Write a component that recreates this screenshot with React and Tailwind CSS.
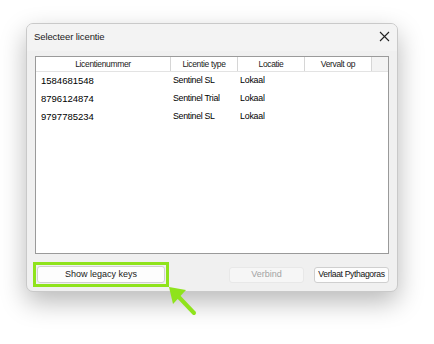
import React from 'react';

const rows = [
  { nr: '1584681548', type: 'Sentinel SL', loc: 'Lokaal' },
  { nr: '8796124874', type: 'Sentinel Trial', loc: 'Lokaal' },
  { nr: '9797785234', type: 'Sentinel SL', loc: 'Lokaal' },
];

const font = { fontFamily: '"Liberation Sans", Arial, sans-serif' };

const App = () => {
  return (
    <div className="relative w-[434px] h-[344px] bg-white pl-[26px] pt-[23px]" style={font}>
      {/* Dialog */}
      <div className="w-[372px] h-[269px] flex flex-col rounded-[7px] border border-[#c9c9c9] bg-[#f0f0f0] shadow-[0_10px_26px_rgba(0,0,0,0.28)] overflow-hidden">
        {/* Title bar */}
        <div className="h-[27px] flex items-center justify-between pl-[7px] pr-[7px] bg-[#f3f3f3]">
          <span className="text-[9.5px] text-[#1b1b1b] tracking-[-0.1px]">Selecteer licentie</span>
          <svg width="11" height="11" viewBox="0 0 11 11" className="mb-[2px]">
            <path d="M1 1 L10 10 M10 1 L1 10" stroke="#222" strokeWidth="1.1" fill="none" />
          </svg>
        </div>

        {/* List */}
        <div className="px-[8px] pt-[5px]">
          <div className="h-[198px] border border-[#9a9a9a] bg-white flex flex-col">
            <div className="h-[15px] flex border-b border-[#e3e3e3] bg-white text-[8.5px] text-[#1a1a1a] tracking-[-0.35px]">
              <div className="w-[135px] flex items-center justify-center border-r border-[#d6d6d6]">Licentienummer</div>
              <div className="w-[67px] flex items-center justify-center border-r border-[#d6d6d6]">Licentie type</div>
              <div className="w-[67px] flex items-center justify-center border-r border-[#d6d6d6]">Locatie</div>
              <div className="w-[67px] flex items-center justify-center border-r border-[#d6d6d6]">Vervalt op</div>
              <div className="flex-1 bg-[#f3f3f3]" />
            </div>
            {rows.map((r) => (
              <div key={r.nr} className="h-[18px] flex items-center text-black">
                <div className="w-[135px] pl-[5px] text-[9.5px]">{r.nr}</div>
                <div className="w-[67px] pl-[2px] text-[8.8px] tracking-[-0.3px]">{r.type}</div>
                <div className="w-[67px] pl-[2px] text-[8.8px] tracking-[-0.2px]">{r.loc}</div>
              </div>
            ))}
          </div>
        </div>

        {/* Buttons */}
        <div className="mt-[8px] pl-[6px] pr-[8px] flex items-center">
          <div className="border-[3px] border-[#8fe31c] p-px">
            <button className="w-[128px] h-[17px] rounded-[3px] border border-[#d0d0d0] bg-[#fdfdfd] text-[9px] text-[#1a1a1a] flex items-center justify-center">
              Show legacy keys
            </button>
          </div>
          <div className="flex-1" />
          <button className="w-[75px] h-[16px] rounded-[3px] border border-[#e8e8e8] bg-[#f6f6f6] text-[9px] text-[#a3a3a3] flex items-center justify-center">
            Verbind
          </button>
          <button className="ml-[10px] w-[75px] h-[16px] rounded-[3px] border border-[#cfcfcf] bg-[#fdfdfd] text-[8.6px] tracking-[-0.35px] text-[#111] flex items-center justify-center">
            Verlaat Pythagoras
          </button>
        </div>
      </div>

      {/* Annotation arrow */}
      <svg className="absolute left-[160px] top-[280px]" width="40" height="40" viewBox="0 0 40 40">
        <polygon points="9,7 26,10 13,24" fill="#8fe31c" />
        <line x1="15" y1="13" x2="34" y2="33" stroke="#8fe31c" strokeWidth="4" strokeLinecap="round" />
      </svg>
    </div>
  );
};

export default App;
